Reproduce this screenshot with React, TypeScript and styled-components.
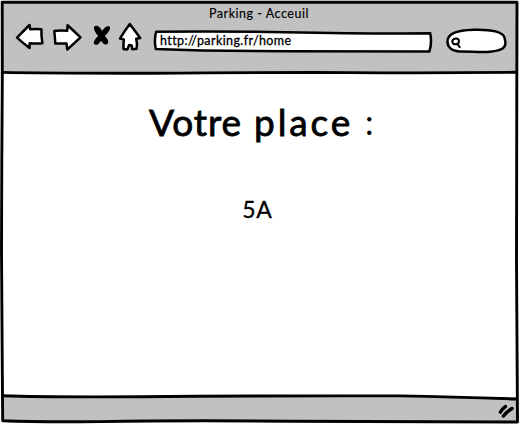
import React from "react";
import styled, { createGlobalStyle } from "styled-components";

const GlobalStyle = createGlobalStyle`
  * { box-sizing: border-box; }
  body { margin: 0; background: #fff; color: #000; font-family: Lato, "Open Sans", sans-serif; }
`;

const Window = styled.main`
  position: relative;
  width: 519px;
  height: 424px;
  padding: 2px;
  display: grid;
  grid-template-rows: 71px 324px 25px;
  overflow: hidden;
`;

const Outline = styled.svg`
  position: absolute;
  inset: 0;
  fill: none;
  stroke: #000;
  stroke-width: 2.9;
  stroke-linejoin: round;
  stroke-linecap: round;
  pointer-events: none;
`;

const Header = styled.header`
  background: #c1c1c1;
  display: flex;
  flex-direction: column;
`;

const Title = styled.div`
  height: 20px;
  line-height: 20px;
  text-align: center;
  padding-right: 2px;
`;

const Label = styled.span<{ $size: number; $spacing?: number; $stroke?: number }>`
  display: inline-block;
  font-size: ${(p) => p.$size}px;
  letter-spacing: ${(p) => p.$spacing ?? 0}px;
  -webkit-text-stroke: ${(p) => p.$stroke ?? 0}px #000;
  white-space: nowrap;
`;

const Toolbar = styled.nav`
  display: flex;
  height: 34px;
  padding-left: 11px;
`;

const Icons = styled.svg`
  width: 132px;
  height: 34px;
  margin-right: 6px;
  flex: none;
`;

const Field = styled.div<{ $width: number }>`
  position: relative;
  flex: none;
  width: ${(p) => p.$width}px;
  height: 34px;
  padding-left: 9px;
  line-height: 34px;
  margin-right: 11px;
`;

const FieldShape = styled.svg`
  position: absolute;
  inset: 0;
  width: 100%;
  height: 100%;
`;

const Address = styled(Label)`
  position: relative;
`;

const Page = styled.section`
  background: #fff;
  display: flex;
  flex-direction: column;
  align-items: center;
  padding-top: 24px;
`;

const Heading = styled.h1`
  display: flex;
  margin: 0;
  width: 222px;
  font-weight: 400;
  height: 50px;
  line-height: 50px;
`;

const Word = styled(Label)<{ $width: number }>`
  width: ${(p) => p.$width}px;
  white-space: pre;
`;

const Place = styled.p`
  margin: 47px 5px 0 0;
  height: 30px;
  line-height: 30px;
`;

const Footer = styled.footer`
  background: #c1c1c1;
  display: flex;
  justify-content: flex-end;
  padding: 1px 3px 0 0;
`;

const ink = { stroke: "#000", strokeWidth: 2.5, strokeLinejoin: "round", strokeLinecap: "round" } as const;

export default function App() {
  return (
    <>
      <GlobalStyle />
      <Window>
        <Header>
          <Title>
            <Label $size={12.5} $spacing={0.52} $stroke={0.15}>Parking - Acceuil</Label>
          </Title>
          <Toolbar>
            <Icons viewBox="13 22 132 34">
              <g fill="#fff" {...ink}>
                <path d="M17 37.6Q24 30.5 29.5 25L30.2 29.2Q36 28.6 41.4 29.2Q41.2 36 42.4 43.2Q36 43.9 29.7 43.3L29.5 48Q23 43 17 37.6Z" />
                <path d="M54.3 31Q60 29.9 67.2 30.8L67.6 25.2Q74 31 80.5 37.4Q73 44.5 67.3 49.5L66.5 43.6Q60 43.3 55.3 43.5Q54.9 37 54.3 31Z" />
                <path d="M129.8 24Q135 31 140.2 38L136.2 38.8Q137.5 43.5 136.6 48.7L132.2 49.2L131.7 45.4L129.1 45L127.4 49.4L123.5 49.1Q123.4 43 123.8 39.4L120 38.6Q124.5 31 129.8 24Z" />
              </g>
              <path d="M94.9 27C98.3 25.3 100 29.2 102.2 32.3C104.4 28.5 106.4 26.3 109.2 27.2C109.9 30.4 106.3 33.2 103.8 35.9C105.9 38.6 109.2 41.7 106.4 43.7C103.7 44.5 102.8 41.5 101 39.3C99 42.7 96.6 45.2 94.6 43.5C94 40.7 96.8 38.2 99.2 35.9C96.7 33.2 94 30.1 94.9 27Z" stroke="#000" strokeWidth="1.6" />
            </Icons>
            <Field $width={280}>
              <FieldShape viewBox="151 22 280 34" overflow="visible">
                <path d="M156.1 31.7Q220 31 285 32.2Q370 33.8 430.2 33.3Q432.2 43 429.3 51.6Q350 51.2 285 51.2Q210 51 155.8 48.9Q153.9 40 156.1 31.7Z" fill="#fff" {...ink} />
              </FieldShape>
              <Address $size={12.5} $spacing={0.4} $stroke={0.3}>http://parking.fr/home</Address>
            </Field>
            <Field $width={65}>
              <FieldShape viewBox="442 22 65 34" overflow="visible">
                <path d="M447.5 42C447.2 34 455 30.3 474 29.7C490 29.2 504.8 31.5 504.8 39C507.5 48 502 50.5 490 51.7C480 52.7 471 51.2 459 51.5C451 50.6 447.7 47 447.5 42Z" fill="#fff" {...ink} />
                <path d="M455.7 38.5C459.8 38 460.2 43.8 456 44.2C451.2 44.6 451 39.2 455.7 38.5ZM457.4 44L459.7 47.2" fill="none" {...ink} strokeWidth={2} />
              </FieldShape>
            </Field>
          </Toolbar>
        </Header>
        <Page>
          <Heading>
            <Word $width={105} $size={37} $spacing={0.9} $stroke={0.8}>Votre </Word>
            <Word $width={111} $size={37} $spacing={2.9} $stroke={0.8}>place </Word>
            <Word $width={6} $size={34}>:</Word>
          </Heading>
          <Place>
            <Label $size={23} $spacing={0.8} $stroke={0.3}>5A</Label>
          </Place>
        </Page>
        <Footer>
          <svg width="20" height="20" viewBox="494 398 20 20" fill="none" stroke="#000" strokeLinecap="round">
            <path d="M499.3 412.2Q501 409 504.6 406.4" strokeWidth="3.3" />
            <path d="M502.4 416Q505.5 411.8 511 408.6" strokeWidth="3.5" />
          </svg>
        </Footer>
        <Outline viewBox="0 0 519 424">
          <path d="M2.2 2.3H517L516.8 90L516.5 260L517.5 422Q400 421.3 290 421.2Q180 420.2 100 421.6Q40 422.3 2.7 420.8L2.3 370L1.5 250L1.8 160L2.3 80Z" />
          <path d="M2.5 72.4Q40 73.3 150 73.2Q280 72.3 350 72.6Q430 73.2 516 72.3" />
          <path d="M2.5 395.8Q45 397.2 140 396.7Q260 395.6 400 395.9Q455 397 516.5 399" />
        </Outline>
      </Window>
    </>
  );
}
